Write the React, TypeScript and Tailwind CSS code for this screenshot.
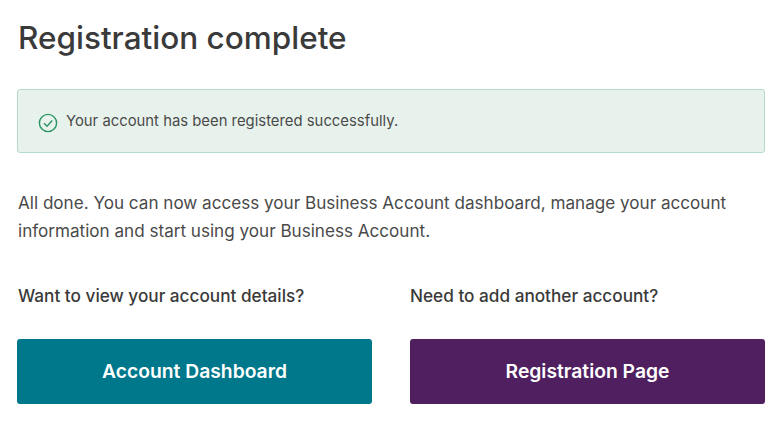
export default function App() {
  return (
    <div className="w-[780px] h-[442px] bg-white overflow-hidden pl-[17px] pt-[17px] text-[#444] font-['Inter',sans-serif]">
      <h1 className="text-[31.5px] leading-[42px] font-medium text-[#3a3a3a] ml-[1px]">Registration complete</h1>
      <div className="mt-[30px] w-[748px] h-[64px] flex items-center gap-[8px] pl-[20px] rounded-[3px] border border-[#b5dccb] bg-[#e8f2ec]">
        <svg width="20" height="20" viewBox="0 0 20 20" fill="none" stroke="#2a9464" strokeWidth="1.4" className="mt-[3px] shrink-0"><circle cx="10" cy="10" r="8.6" /><path d="M6 10.2l3 3 5.2-5.6" /></svg>
        <span className="text-[14.85px] text-[#4a4a4a]">Your account has been registered successfully.</span>
      </div>
      <p className="mt-[36px] ml-[1px] w-[740px] text-[17.1px] leading-[28px] text-[#4a4a4a]">All done. You can now access your Business Account dashboard, manage your account information and start using your Business Account.</p>
      <div className="mt-[39px] grid grid-cols-[355px_355px] gap-x-[38px]">
        <div>
          <p className="ml-[1px] text-[17.2px] leading-[24px] font-medium text-[#3a3a3a]">Want to view your account details?</p>
          <button className="mt-[31px] w-full h-[65px] rounded-[3px] bg-[#00788c] text-white text-[19.3px] font-semibold">Account Dashboard</button>
        </div>
        <div>
          <p className="text-[17.2px] leading-[24px] font-medium text-[#3a3a3a]">Need to add another account?</p>
          <button className="mt-[31px] w-full h-[65px] rounded-[3px] bg-[#501f5f] text-white text-[19.3px] font-semibold">Registration Page</button>
        </div>
      </div>
    </div>
  );
}
